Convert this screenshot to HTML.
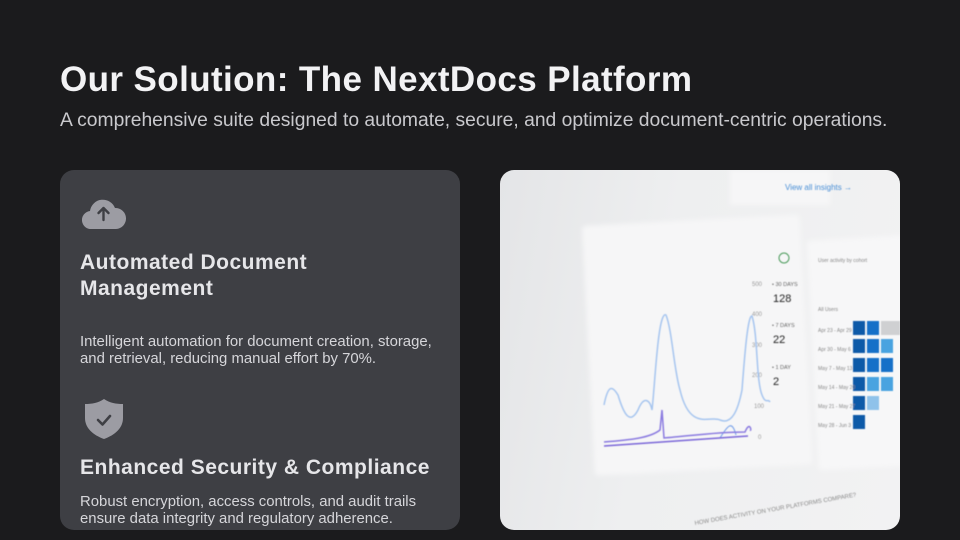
<!DOCTYPE html>
<html><head><meta charset="utf-8"><style>
*{margin:0;padding:0;box-sizing:border-box}
body{width:960px;height:540px;background:#1b1b1d;font-family:"Liberation Sans",sans-serif;overflow:hidden;position:relative;color:#e8e8ea}
h1{position:absolute;left:60px;top:60px;font-size:35px;font-weight:700;color:#f2f2f4;letter-spacing:0.4px}
.sub{position:absolute;left:60px;top:110px;font-size:19.3px;color:#c9c9cd}
.card{position:absolute;left:60px;top:170px;width:400px;height:360px;background:#3e3f44;border-radius:14px;overflow:hidden}
.card h2{position:absolute;left:20px;font-size:21px;font-weight:700;color:#e6e6e9;line-height:26px;letter-spacing:0.5px}
.card p{position:absolute;left:20px;font-size:14.9px;color:#d6d6da;line-height:17px}
.img{position:absolute;left:500px;top:170px;width:400px;height:360px;border-radius:14px;overflow:hidden;background:linear-gradient(100deg,#e4e5e7 0%,#eeeff0 40%,#f2f2f3 100%)}
</style></head><body>
<h1>Our Solution: The NextDocs Platform</h1>
<div class="sub">A comprehensive suite designed to automate, secure, and optimize document-centric operations.</div>
<div class="card">
<svg style="position:absolute;left:22px;top:25px" width="44" height="36" viewBox="0 0 44 36"><path d="M10 34 A9 9 0 0 1 8 16 A13 13 0 0 1 33 13 A10.5 10.5 0 0 1 34 34 Z" fill="#9c9ca3"/><path d="M21.5 25 V13 M16.5 18 L21.5 13 L26.5 18" stroke="#3e3f44" stroke-width="2.4" fill="none" stroke-linecap="round" stroke-linejoin="round"/></svg>
<h2 style="top:80px">Automated Document<br>Management</h2>
<p style="top:164px">Intelligent automation for document creation, storage,<br>and retrieval, reducing manual effort by 70%.</p>
<svg style="position:absolute;left:23px;top:228px" width="42" height="42" viewBox="0 0 42 42"><path d="M21 1 C27 5 33 6 40 6 V20 C40 30 32 37 21 41 C10 37 2 30 2 20 V6 C9 6 15 5 21 1Z" fill="#9c9ca3"/><path d="M15 22 L19.5 26.5 L27 18" stroke="#3e3f44" stroke-width="2.6" fill="none" stroke-linecap="round" stroke-linejoin="round"/></svg>
<h2 style="top:285px">Enhanced Security &amp; Compliance</h2>
<p style="top:324px">Robust encryption, access controls, and audit trails<br>ensure data integrity and regulatory adherence.</p>
</div>
<div class="img">
<svg width="400" height="360" viewBox="0 0 400 360">
<defs><filter id="b"><feGaussianBlur stdDeviation="0.6"/></filter><filter id="b2"><feGaussianBlur stdDeviation="2.5"/></filter></defs>
<g filter="url(#b2)">
<rect x="88" y="50" width="218" height="250" fill="#f6f6f7" rx="4" transform="rotate(-3 200 170)"/>
<rect x="312" y="68" width="100" height="230" fill="#f7f7f8" rx="4" transform="rotate(-3 360 170)"/>
<rect x="230" y="0" width="100" height="35" fill="#f6f6f7"/>
</g>
<g filter="url(#b)" font-family="Liberation Sans">
<text x="285" y="20" font-size="8" fill="#4a8fd6">View all insights →</text>
<text x="272" y="116" font-size="5.5" fill="#666">• 30 DAYS</text>
<text x="273" y="132" font-size="11" fill="#222">128</text>
<text x="272" y="157" font-size="5.5" fill="#666">• 7 DAYS</text>
<text x="273" y="173" font-size="11" fill="#222">22</text>
<text x="272" y="199" font-size="5.5" fill="#666">• 1 DAY</text>
<text x="273" y="215" font-size="11" fill="#222">2</text>
<g font-size="6" fill="#999"><text x="252" y="116">500</text><text x="252" y="146">400</text><text x="252" y="177">300</text><text x="252" y="207">200</text><text x="254" y="238">100</text><text x="258" y="269">0</text></g>
<path d="M104 235 C108 215 112 215 118 225 C124 245 130 255 138 240 C144 225 150 230 152 240 C155 215 158 140 166 145 C172 160 174 200 180 220 C190 262 210 245 220 250 C232 255 238 240 242 220 C245 180 248 145 252 146 C258 165 256 210 262 225 C266 235 268 228 270 232" stroke="#a6c5ef" stroke-width="1.5" fill="none"/>
<path d="M220 268 C228 255 232 250 236 265" stroke="#7fa6ea" stroke-width="1.2" fill="none"/>
<path d="M104 272 C130 270 150 268 160 260 L162 240 L164 268 C190 266 215 262 245 262 C250 250 252 262 250 260" stroke="#8a7ae0" stroke-width="1.5" fill="none"/>
<path d="M104 276 L248 266" stroke="#7a66d8" stroke-width="1.5"/>
<circle cx="284" cy="88" r="5" fill="none" stroke="#4a9a5a" stroke-width="1"/>
<g fill="#0b5aa8"><rect x="353" y="151" width="12" height="14"/><rect x="353" y="169" width="12" height="14"/><rect x="353" y="188" width="12" height="14"/><rect x="353" y="207" width="12" height="14"/><rect x="353" y="226" width="12" height="14"/><rect x="353" y="245" width="12" height="14"/></g>
<g fill="#1870c8"><rect x="367" y="151" width="12" height="14"/><rect x="367" y="169" width="12" height="14"/><rect x="367" y="188" width="12" height="14"/></g>
<g fill="#4aa3e0"><rect x="381" y="169" width="12" height="14"/><rect x="367" y="207" width="12" height="14"/><rect x="381" y="207" width="12" height="14"/></g>
<rect x="381" y="188" width="12" height="14" fill="#1870c8"/>
<rect x="367" y="226" width="12" height="14" fill="#8fc2ea"/>
<rect x="381" y="151" width="19" height="14" fill="#cfd0d2"/>
<g font-size="5" fill="#888"><text x="318" y="162">Apr 23 - Apr 29</text><text x="318" y="181">Apr 30 - May 6</text><text x="318" y="200">May 7 - May 13</text><text x="318" y="219">May 14 - May 20</text><text x="318" y="238">May 21 - May 27</text><text x="318" y="257">May 28 - Jun 3</text><text x="318" y="141">All Users</text><text x="318" y="92">User activity by cohort</text></g>
<text x="195" y="355" font-size="6" fill="#888" transform="rotate(-10 195 355)">HOW DOES ACTIVITY ON YOUR PLATFORMS COMPARE?</text>
</g>
</svg>
</div>
</body></html>
